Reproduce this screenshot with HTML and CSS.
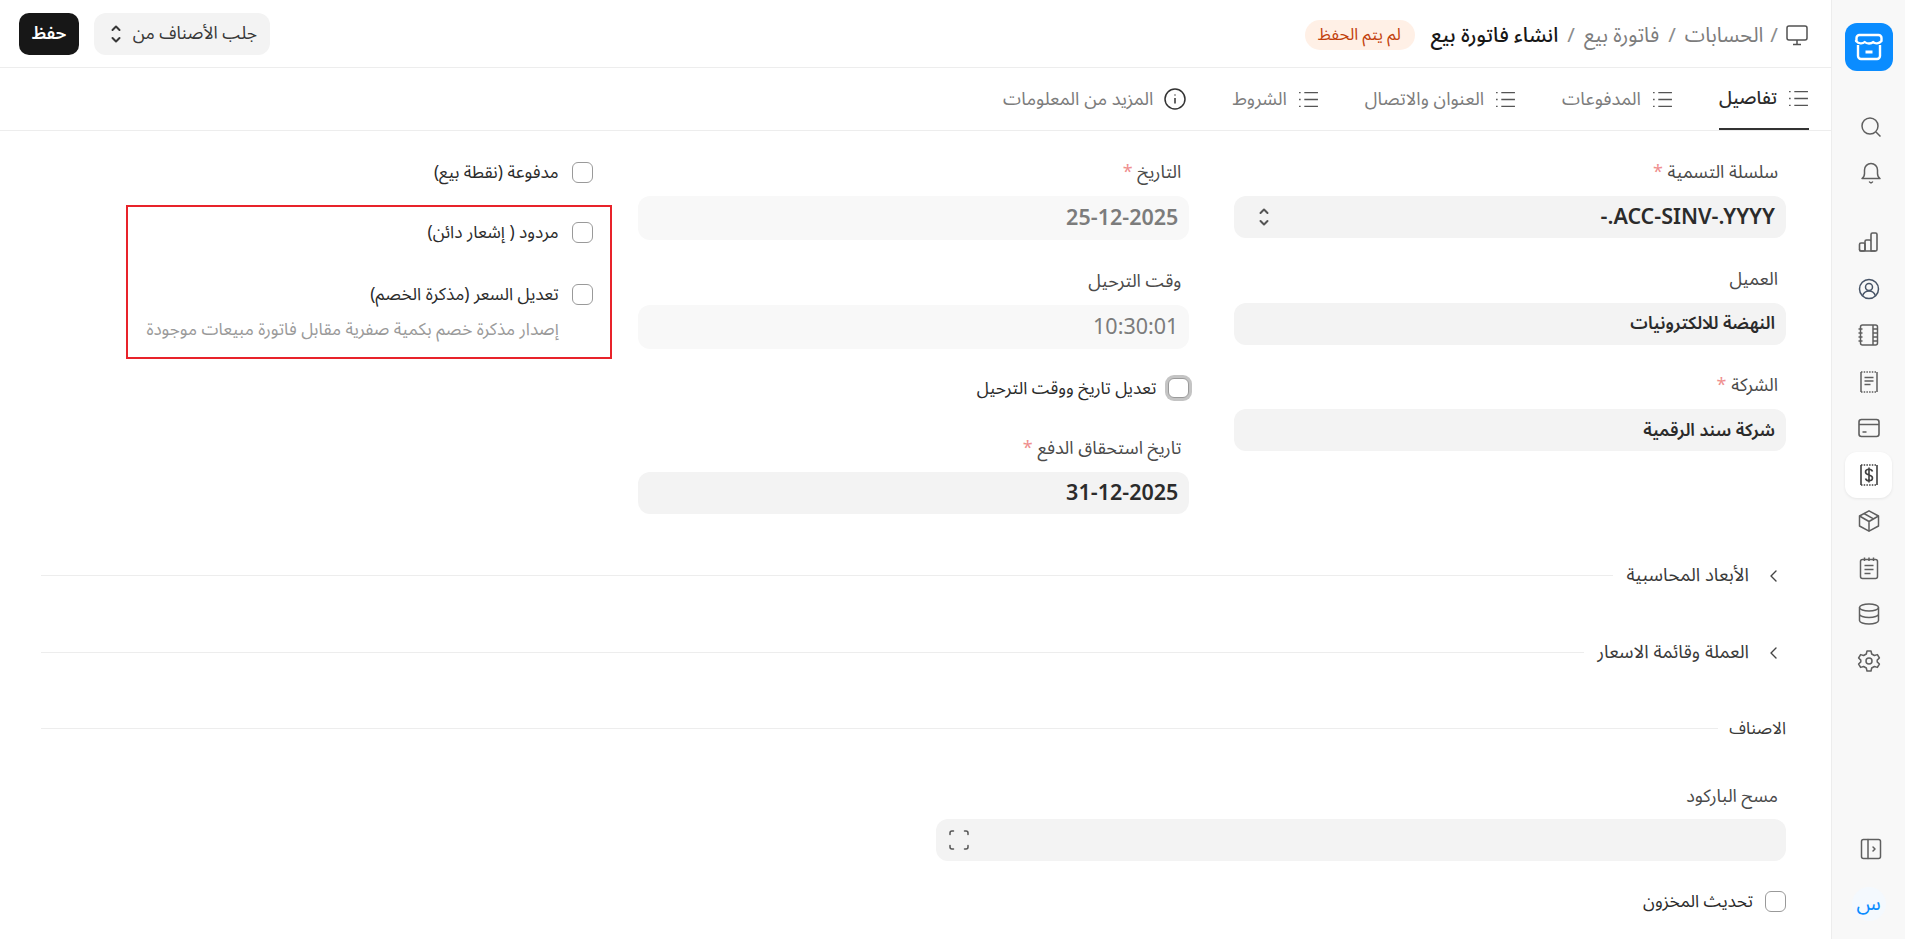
FILE: index.html
```html
<!DOCTYPE html>
<html lang="ar" dir="rtl">

<head>
    <meta charset="UTF-8">
    <title>انشاء فاتورة بيع</title>
    <link rel="stylesheet" href="styles.css">
</head>

<body>
    <svg class="icon-defs" aria-hidden="true">
        <symbol id="list" viewBox="0 0 20 20">
            <path d="M6 3.500h13M6 10h13M6 16.500h13M1 3.500h1.500M1 10h1.500M1 16.500h1.500" fill="none" stroke="currentColor" stroke-width="1.300" />
        </symbol>
        <symbol id="updown" viewBox="0 0 12 24">
            <path d="M2.500 8 6 4.500 9.500 8M2.500 16 6 19.500 9.500 16" fill="none" stroke="currentColor" stroke-width="2" stroke-linecap="round" stroke-linejoin="round" />
        </symbol>
        <symbol id="chevron" viewBox="0 0 14 14">
            <path d="M9 2 4 7l5 5" fill="none" stroke="currentColor" stroke-width="1.400" stroke-linecap="round" stroke-linejoin="round" />
        </symbol>
    </svg>

    <aside class="sidebar">
        <div class="logo">
            <svg width="32" height="32" viewBox="0 0 32 32" fill="none" stroke="#fff" stroke-width="2.400" stroke-linejoin="round">
                <path d="M5 14v11a3 3 0 0 0 3 3h16a3 3 0 0 0 3-3V14" />
                <path d="M3.500 10V7a3 3 0 0 1 3-3h19a3 3 0 0 1 3 3v3c-2.500 3-6.500 3-8.300 1-2 2-6.400 2-8.500 0-2 2-6 2-8.700-1Z" />
                <path d="M12.500 21h7" stroke-width="3" />
            </svg>
        </div>

        <div class="side-group side-group-top">
            <button class="side-btn side-btn-shift">
                <svg width="24" height="24" viewBox="0 0 24 24" fill="none" stroke="#5f5f5f" stroke-width="1.500"><circle cx="11" cy="11" r="8" /><path d="m17 17 4.500 4.500" /></svg>
            </button>
            <button class="side-btn side-btn-shift">
                <svg width="24" height="24" viewBox="0 0 24 24" fill="none" stroke="#5f5f5f" stroke-width="1.500" stroke-linecap="round" stroke-linejoin="round"><path d="M3 18.500c1.500-1 2.500-2.500 2.500-5V10a6.500 6.500 0 0 1 13 0v3.500c0 2.500 1 4 2.500 5Z" /><path d="m10.500 22 1.500 1 1.500-1" /></svg>
            </button>
        </div>

        <div class="side-group side-group-nav">
            <button class="side-btn">
                <svg width="24" height="24" viewBox="0 0 24 24" fill="none" stroke="#5f5f5f" stroke-width="1.600" stroke-linejoin="round"><rect x="2.500" y="13" width="5.500" height="8" rx="1.500" /><path d="M8 21v-9.500A1.500 1.500 0 0 1 9.500 10h3a1.500 1.500 0 0 1 1.500 1.500V21M14 21V4.500A1.500 1.500 0 0 1 15.500 3h3A1.500 1.500 0 0 1 20 4.500V19.500A1.500 1.500 0 0 1 18.500 21Z" /><path d="M2.500 19.500A1.500 1.500 0 0 0 4 21h14.500" /></svg>
            </button>
            <button class="side-btn">
                <svg width="24" height="24" viewBox="0 0 24 24" fill="none" stroke="#475467" stroke-width="1.500"><circle cx="12" cy="12" r="9.500" /><circle cx="12" cy="10" r="3.500" /><path d="M5.500 19c1-3 3.500-5 6.500-5s5.500 2 6.500 5" /></svg>
            </button>
            <button class="side-btn">
                <svg width="24" height="24" viewBox="0 0 24 24" fill="none" stroke="#5f5f5f" stroke-width="1.500" stroke-linejoin="round"><rect x="3.500" y="2" width="17" height="20" rx="2" /><path d="M16 2v20M1.500 6h4M1.500 10h4M1.500 14h4M1.500 18h4M16 6h4.500M16 10h4.500M16 14h4.500M16 18h4.500" /></svg>
            </button>
            <button class="side-btn">
                <svg width="24" height="24" viewBox="0 0 24 24" fill="none" stroke="#5f5f5f" stroke-width="1.500"><path d="M4 2v20M20 2v20" /><path d="M4 2h16M4 22h16" stroke-dasharray="1.500 1.200" /><path d="M7.500 7.500h9M7.500 11h9M7.500 14.500h6" /></svg>
            </button>
            <button class="side-btn">
                <svg width="24" height="24" viewBox="0 0 24 24" fill="none" stroke="#5f5f5f" stroke-width="1.600"><rect x="2" y="3.500" width="20" height="17" rx="2.500" /><path d="M2 8.500h20M5.500 16h4" /></svg>
            </button>
            <button class="side-btn side-btn-active">
                <svg width="24" height="24" viewBox="0 0 24 24" fill="none" stroke="#404040" stroke-width="1.600"><path d="M4 2v20M20 2v20" /><path d="M4 2h16M4 22h16" stroke-dasharray="1.500 1.200" /><path d="M15.500 8.500c-.5-1.500-1.900-2.300-3.500-2.300-2 0-3.500 1.100-3.500 2.800s1.400 2.400 3.500 3c2.100.6 3.500 1.300 3.500 3s-1.500 2.800-3.500 2.800c-1.700 0-3-.8-3.500-2.300M12 4.500v15" /></svg>
            </button>
            <button class="side-btn">
                <svg width="24" height="24" viewBox="0 0 24 24" fill="none" stroke="#5f5f5f" stroke-width="1.500" stroke-linejoin="round"><path d="M12 1.800 21.500 7v10L12 22.200 2.500 17V7Z" /><path d="M2.500 7 12 12.500 21.500 7M12 12.500v9.700M7 4.500l9.500 5.300" /></svg>
            </button>
            <button class="side-btn">
                <svg width="24" height="24" viewBox="0 0 24 24" fill="none" stroke="#5f5f5f" stroke-width="1.500" stroke-linejoin="round"><rect x="3.500" y="3.500" width="17" height="19" rx="2" /><path d="M7.500 1.500V5M12 1.500V5M16.500 1.500V5M7.500 9.500h9M7.500 13.500h9M7.500 17.500h6" /></svg>
            </button>
            <button class="side-btn">
                <svg width="24" height="24" viewBox="0 0 24 24" fill="none" stroke="#5f5f5f" stroke-width="1.500"><ellipse cx="12" cy="5.500" rx="9.500" ry="3.500" /><path d="M2.500 5.500v13c0 2 4.300 3.500 9.500 3.500s9.500-1.500 9.500-3.500v-13M2.500 12c0 2 4.300 3.500 9.500 3.500s9.500-1.500 9.500-3.500" /></svg>
            </button>
            <button class="side-btn">
                <svg width="24" height="24" viewBox="0 0 24 24" fill="none" stroke="#5f5f5f" stroke-width="1.500" stroke-linejoin="round"><circle cx="12" cy="12" r="3" /><path d="M10 2h4l.7 3 2.700 1.500 3-.9 2 3.400-2.200 2.100v1.800l2.200 2.100-2 3.400-3-.9L14.700 19l-.7 3h-4l-.7-3-2.700-1.500-3 .9-2-3.400 2.200-2.100v-1.800L1.600 9l2-3.400 3 .9L9.300 5Z" /></svg>
            </button>
        </div>

        <div class="side-bottom">
            <button class="side-btn side-btn-shift">
                <svg width="24" height="24" viewBox="0 0 24 24" fill="none" stroke="#5f5f5f" stroke-width="1.500" stroke-linecap="round" stroke-linejoin="round"><rect x="2.500" y="2.500" width="19" height="19" rx="2" /><path d="M9 2.500v19M14 10l2 2-2 2" /></svg>
            </button>
            <div class="avatar">س</div>
        </div>
    </aside>

    <div class="page">
        <header class="topbar">
            <div class="crumbs">
                <svg width="22" height="22" viewBox="0 0 22 22" fill="none" stroke="#525252" stroke-width="1.500" stroke-linejoin="round"><rect x="1" y="2" width="20" height="14" rx="2" /><path d="M11 16v4M7 20.500h8" /></svg>
                <span class="crumb-sep crumb-sep-first">/</span>
                <span class="crumb">الحسابات</span>
                <span class="crumb-sep">/</span>
                <span class="crumb">فاتورة بيع</span>
                <span class="crumb-sep">/</span>
                <span class="crumb-current">انشاء فاتورة بيع</span>
                <span class="badge">لم يتم الحفظ</span>
            </div>
            <div class="actions">
                <button class="btn btn-light">
                    جلب الأصناف من
                    <svg width="12" height="24"><use href="#updown" /></svg>
                </button>
                <button class="btn btn-dark">حفظ</button>
            </div>
        </header>

        <nav class="tabs">
            <a class="tab tab-active"><svg width="21" height="21"><use href="#list" /></svg>تفاصيل</a>
            <a class="tab"><svg width="21" height="21"><use href="#list" /></svg>المدفوعات</a>
            <a class="tab"><svg width="21" height="21"><use href="#list" /></svg>العنوان والاتصال</a>
            <a class="tab"><svg width="21" height="21"><use href="#list" /></svg>الشروط</a>
            <a class="tab">
                <svg width="22" height="22" viewBox="0 0 22 22" fill="none" stroke="#333" stroke-width="1.500"><circle cx="11" cy="11" r="10" /><path d="M11 10v5.500M11 6.500v1" /></svg>
                المزيد من المعلومات
            </a>
        </nav>

        <main class="content">
            <div class="form-grid">
                <div class="col">
                    <div class="field">
                        <label>سلسلة التسمية <span class="req">*</span></label>
                        <div class="input input-select">
                            <span class="latin">ACC-SINV-.YYYY.-</span>
                            <svg width="12" height="24"><use href="#updown" /></svg>
                        </div>
                    </div>
                    <div class="field">
                        <label>العميل</label>
                        <div class="input">النهضة للالكترونيات</div>
                    </div>
                    <div class="field">
                        <label>الشركة <span class="req">*</span></label>
                        <div class="input">شركة سند الرقمية</div>
                    </div>
                </div>

                <div class="col">
                    <div class="field">
                        <label>التاريخ <span class="req">*</span></label>
                        <div class="input input-readonly"><span class="latin">25-12-2025</span></div>
                    </div>
                    <div class="field">
                        <label>وقت الترحيل</label>
                        <div class="input input-readonly input-time"><span class="latin">10:30:01</span></div>
                    </div>
                    <label class="check check-focus"><span class="box"></span>تعديل تاريخ ووقت الترحيل</label>
                    <div class="field">
                        <label>تاريخ استحقاق الدفع <span class="req">*</span></label>
                        <div class="input"><span class="latin">31-12-2025</span></div>
                    </div>
                </div>

                <div class="col col-checks">
                    <label class="check"><span class="box"></span>مدفوعة (نقطة بيع)</label>
                    <div class="marked">
                        <label class="check"><span class="box"></span>مردود ( إشعار دائن)</label>
                        <label class="check"><span class="box"></span>تعديل السعر (مذكرة الخصم)</label>
                        <p class="help">إصدار مذكرة خصم بكمية صفرية مقابل فاتورة مبيعات موجودة</p>
                    </div>
                </div>
            </div>

            <div class="section-head">
                <svg class="chev" width="14" height="14"><use href="#chevron" /></svg>
                <span>الأبعاد المحاسبية</span>
            </div>
            <div class="section-head">
                <svg class="chev" width="14" height="14"><use href="#chevron" /></svg>
                <span>العملة وقائمة الاسعار</span>
            </div>
            <div class="section-head section-plain">
                <span>الاصناف</span>
            </div>

            <div class="barcode">
                <label>مسح الباركود</label>
                <div class="input input-barcode">
                    <svg width="20" height="20" viewBox="0 0 20 20" fill="none" stroke="#555" stroke-width="1.500" stroke-linecap="round"><path d="M1 4.500V3a2 2 0 0 1 2-2h1.500M15.500 1H17a2 2 0 0 1 2 2v1.500M19 15.500V17a2 2 0 0 1-2 2h-1.500M4.500 19H3a2 2 0 0 1-2-2v-1.500" /></svg>
                </div>
            </div>
            <label class="check check-stock"><span class="box"></span>تحديث المخزون</label>
        </main>
    </div>
</body>

</html>
```

FILE: styles.css
```css
* {
    box-sizing: border-box;
}

html,
body {
    height: 100%;
    margin: 0;
}

body {
    display: flex;
    overflow: hidden;
    background: #fff;
    color: #2b2b2b;
    font-family: "Noto Sans Arabic", "Noto Sans", "DejaVu Sans", sans-serif;
    font-size: 18px;
}

.icon-defs {
    display: none;
}

button {
    font-family: inherit;
    border: none;
    background: none;
    padding: 0;
}

/* sidebar */
.sidebar {
    width: 74px;
    flex-shrink: 0;
    height: 100%;
    display: flex;
    flex-direction: column;
    align-items: center;
    padding-top: 23px;
    background: #f8f8f8;
    border-left: 1px solid #ededed;
}

.logo {
    width: 48px;
    height: 48px;
    border-radius: 12px;
    background: #0a8cff;
    display: flex;
    align-items: center;
    justify-content: center;
}

.side-btn {
    width: 47px;
    height: 46.500px;
    display: flex;
    align-items: center;
    justify-content: center;
}

.side-btn-shift svg {
    margin-right: -4px;
}

.side-group-top {
    margin-top: 33px;
}

.side-group-top .side-btn {
    height: 45px;
}

.side-group-nav {
    margin-top: 25px;
}

.side-btn-active {
    background: #fff;
    border-radius: 12px;
    box-shadow: 0 1px 3px rgba(0, 0, 0, 0.08);
}

.side-bottom {
    margin-top: auto;
    padding-bottom: 18px;
    display: flex;
    flex-direction: column;
    align-items: center;
    gap: 15px;
}

.avatar {
    width: 34px;
    height: 34px;
    border-radius: 50%;
    background: #f4f9fe;
    color: #0a8cff;
    font-size: 20px;
    line-height: 34px;
    text-align: center;
}

/* header */
.page {
    flex: 1;
    min-width: 0;
    height: 100%;
}

.topbar {
    height: 68px;
    display: flex;
    align-items: center;
    justify-content: space-between;
    padding: 0 23px 0 19px;
    border-bottom: 1px solid #ededed;
}

.crumbs {
    display: flex;
    align-items: center;
    gap: 9px;
    margin-top: 3px;
    font-size: 20.500px;
}

.crumb {
    color: #7c7c7c;
}

.crumb-sep {
    color: #8c8c8c;
}

.crumb-sep-first {
    margin: 0 -1px 0 -2px;
}

.crumb-current {
    color: #171717;
    font-weight: 500;
}

.badge {
    height: 30px;
    line-height: 30px;
    padding: 0 14px 0 13px;
    margin-right: 7px;
    border-radius: 15px;
    background: #fff0e6;
    color: #c2410c;
    font-size: 16.500px;
}

.actions {
    display: flex;
    gap: 15px;
}

.btn {
    height: 42px;
    display: flex;
    align-items: center;
    justify-content: center;
    font-size: 17.500px;
}

.btn-light {
    width: 176px;
    justify-content: space-between;
    padding: 0 13px 0 16px;
    background: #f3f3f3;
    border-radius: 12px;
    color: #383838;
}

.btn-dark {
    width: 60px;
    background: #171717;
    border-radius: 10px;
    color: #fff;
    font-weight: 600;
}

/* tabs */
.tabs {
    height: 63px;
    display: flex;
    gap: 46px;
    padding-right: 22px;
    border-bottom: 1px solid #ededed;
}

.tab {
    display: flex;
    align-items: center;
    gap: 11px;
    height: 62px;
    color: #7c7c7c;
    font-size: 18.300px;
}

.tab svg {
    color: #555;
}

.tab-active {
    color: #2b2b2b;
    font-weight: 500;
    border-bottom: 2px solid #333;
}

/* form */
.content {
    padding: 0 45px 0 41px;
}

.form-grid {
    display: grid;
    grid-template-columns: repeat(3, 1fr);
    gap: 45px;
    padding-top: 27px;
}

.col {
    display: flex;
    flex-direction: column;
    gap: 26.500px;
}

.field label,
.barcode label {
    display: block;
    height: 28px;
    line-height: 28px;
    margin: 0 8px 10px 0;
    color: #4a4a4a;
    font-size: 18px;
}

.req {
    color: #ef8f8f;
}

.input {
    height: 42px;
    display: flex;
    align-items: center;
    justify-content: space-between;
    padding: 0 11px;
    border-radius: 12px;
    background: #f3f3f3;
    color: #2b2b2b;
    font-size: 17.500px;
    font-weight: 600;
}

.latin {
    font-size: 21.500px;
}

.input-select svg {
    margin-left: 13px;
    color: #555;
}

.input-readonly {
    height: 44px;
    background: #f8f8f8;
    color: #7c7c7c;
}

.input-time {
    font-weight: 400;
}

.check {
    display: flex;
    align-items: center;
    gap: 13px;
    height: 28px;
    color: #2b2b2b;
    font-size: 17.300px;
}

.box {
    width: 21px;
    height: 21px;
    flex-shrink: 0;
    border: 1px solid #9a9a9a;
    border-radius: 6px;
    background: #fff;
}

.check-focus {
    height: 30px;
    margin-top: -2px;
    margin-bottom: 4px;
    gap: 12px;
}

.check-focus .box {
    height: 20px;
    box-shadow: 0 0 0 3px #c4c4c4;
}

.col-checks {
    gap: 19px;
}

.marked {
    width: 486px;
    margin-right: -19px;
    padding: 11px 17px 15px 0;
    border: 2px solid #e8232a;
    display: flex;
    flex-direction: column;
    gap: 34px;
}

.help {
    margin: -24px 34px 0 0;
    line-height: 24px;
    color: #9a9a9a;
    font-size: 17.200px;
    white-space: nowrap;
}

.section-head {
    height: 24px;
    margin-top: 53px;
    display: flex;
    align-items: center;
    gap: 18px;
    padding-right: 5px;
    font-size: 18.500px;
    color: #3a3a3a;
}

.form-grid + .section-head {
    margin-top: 50px;
}

.section-head::after {
    content: "";
    flex: 1;
    height: 1px;
    margin-right: -5px;
    background: #ededed;
}

.section-plain {
    padding-right: 0;
    margin-top: 52px;
    gap: 16px;
    font-size: 17px;
}

.chev {
    color: #444;
    flex-shrink: 0;
}

.barcode {
    margin-top: 41px;
}

.barcode label {
    margin-bottom: 9px;
}

.input-barcode {
    width: 850px;
    height: 42px;
    justify-content: flex-end;
    padding: 0 13px;
}

.check-stock {
    margin-top: 27px;
    gap: 12px;
}
```
